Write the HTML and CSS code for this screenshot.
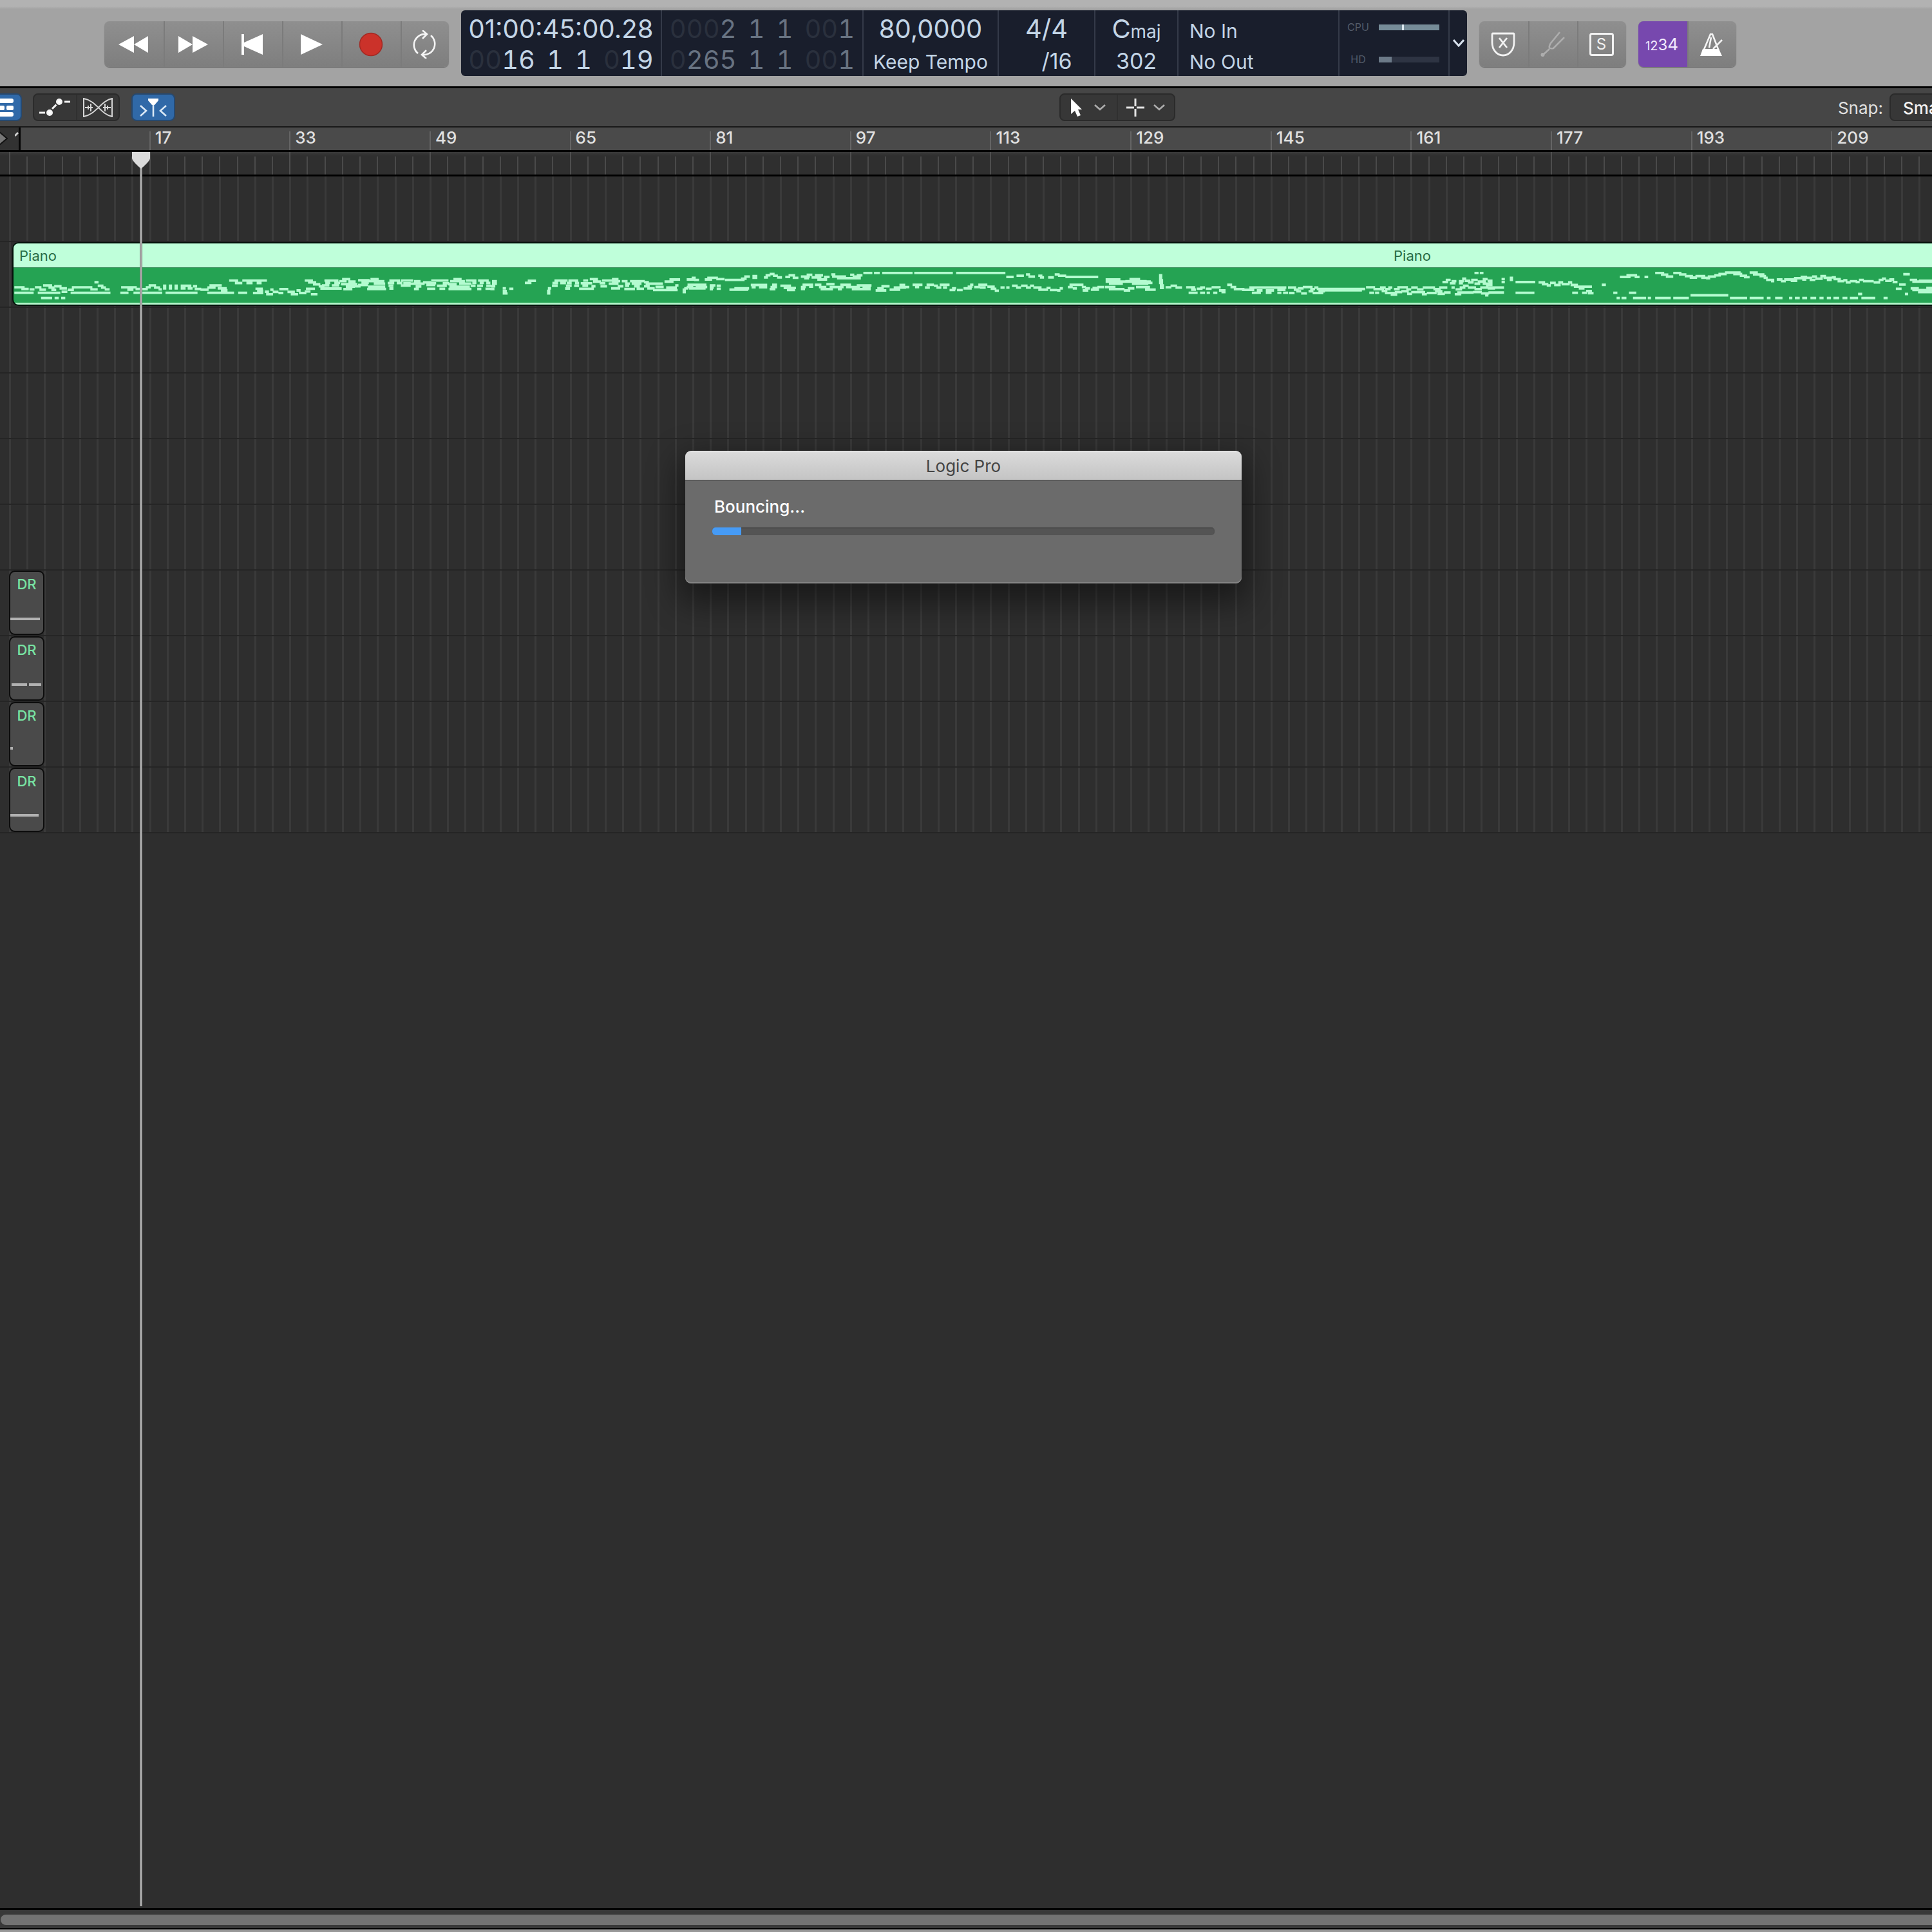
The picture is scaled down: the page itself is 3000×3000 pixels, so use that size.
FILE: index.html
```html
<!DOCTYPE html>
<html lang="en">
<head>
<meta charset="utf-8">
<title>Logic Pro</title>
<link rel="stylesheet" href="styles.css">
</head>
<body>
<header class="control-bar">
  <div class="group transport">
    <button aria-label="Rewind"><svg width="46" height="26" viewBox="0 0 46 26"><path fill="#fff" d="M0 13 24 0V13L46 0V26L24 13V26Z"/></svg></button>
    <button aria-label="Forward"><svg width="46" height="26" viewBox="0 0 46 26"><path fill="#fff" d="M46 13 22 0V13L0 0V26L22 13V26Z"/></svg></button>
    <button aria-label="Go to beginning"><svg width="34" height="32" viewBox="0 0 34 32"><path fill="#fff" d="M0 0H4V13L33 0V32L4 19V32H0Z"/></svg></button>
    <button aria-label="Play"><svg width="34" height="32" viewBox="0 0 34 32"><path fill="#fff" d="M0 0 34 16 0 32Z"/></svg></button>
    <button aria-label="Record"><svg width="38" height="38" viewBox="0 0 38 38"><circle cx="19" cy="19" r="17.5" fill="#cb322a" stroke="#a32a24" stroke-width="1.5"/></svg></button>
    <button class="narrow" aria-label="Cycle"><svg width="44" height="44" viewBox="0 0 44 44" fill="none" stroke="#f4f4f4" stroke-width="2.6"><path d="M12 36A17 17 0 0 1 25 6M32 8A17 17 0 0 1 19 38M19 0 26 6 19 13M25 31 18 38 25 44"/></svg></button>
  </div>

  <div class="lcd">
    <div class="cell time">
      <div class="row">01:00:45:00.28</div>
      <div class="row digits"><span><i>00</i>16</span><span>1</span><span>1</span><span><i>0</i>19</span></div>
    </div>
    <div class="cell locators">
      <div class="row digits"><span><i>000</i>2</span><span>1</span><span>1</span><span><i>00</i>1</span></div>
      <div class="row digits"><span><i>0</i>265</span><span>1</span><span>1</span><span><i>00</i>1</span></div>
    </div>
    <div class="cell tempo">
      <div class="row">80,0000</div>
      <div class="row"><span class="small">Keep Tempo</span></div>
    </div>
    <div class="cell meter">
      <div class="row">4/4</div>
      <div class="row division"><span class="medium">/16</span></div>
    </div>
    <div class="cell key">
      <div class="row">C<span class="mode">maj</span></div>
      <div class="row"><span class="medium">302</span></div>
    </div>
    <div class="cell io">
      <div class="row"><span class="small">No In</span></div>
      <div class="row"><span class="small">No Out</span></div>
    </div>
    <div class="cell load">
      <div class="load-row"><span>CPU</span><div class="load-bar full"></div></div>
      <div class="load-row"><span>HD</span><div class="load-bar part"></div></div>
    </div>
    <button class="lcd-menu" aria-label="Display mode"><svg width="18" height="12" viewBox="0 0 18 12" fill="none" stroke="#d8e2ee" stroke-width="3"><path d="M1 1 9 10 17 1"/></svg></button>
  </div>

  <div class="group modes">
    <button aria-label="Replace"><svg width="38" height="38" viewBox="0 0 38 38" fill="none" stroke="#f2f2f2" stroke-width="2.8"><path d="M3 2H35Q36 2 36 4V16C36 28 28 36 19 36S2 28 2 16V4Q2 2 3 2ZM13 9 25 24M25 9 13 24"/></svg></button>
    <button aria-label="Tuner"><svg width="40" height="40" viewBox="0 0 40 40" fill="none" stroke="#adadad" stroke-width="2.6"><path d="M31 1 17 18Q11 28 21 26L38 9M15 27 4 37"/><circle cx="4.500" cy="36" r="3" fill="#adadad" stroke="none"/></svg></button>
    <button aria-label="Solo"><span class="solo">S</span></button>
  </div>
  <div class="group modes">
    <button class="count-in" aria-label="Count in"><span class="n1">1</span><span class="n2">2</span><span class="n3">3</span><span class="n4">4</span></button>
    <button aria-label="Metronome"><svg width="36" height="38" viewBox="0 0 36 38" fill="none" stroke="#f5f5f5" stroke-width="2.6"><path d="M5 29 16 3H19L29 29M17 8 14 24M34 12 20 26"/><path fill="#fff" stroke="none" d="M4 26H29L34 37H0Z"/></svg></button>
  </div>
</header>

<nav class="toolbar">
  <button class="tool on first" aria-label="Region view"><svg width="42" height="28" viewBox="0 0 42 28" fill="#fff"><rect x="0" width="42" height="7" rx="3"/><rect x="14" y="11" width="14" height="7" rx="2"/><rect x="31" y="11" width="11" height="7" rx="2"/><rect x="0" y="21" width="42" height="7" rx="3"/></svg></button>
  <div class="tool-group">
    <button aria-label="Automation"><svg width="48" height="28" viewBox="0 0 48 28" stroke="#f4f4f4" stroke-width="3" fill="#fff"><path d="M0 22H9M39 5H48M20 16 28 8" stroke-dasharray="9 3"/><circle cx="16" cy="22" r="3.500"/><circle cx="31" cy="5" r="3.500"/></svg></button>
    <button aria-label="Flex"><svg width="46" height="30" viewBox="0 0 46 30" fill="none" stroke="#d6d6d6" stroke-width="2"><path d="M1 1V29C20 26 28 4 45 1V29C28 26 20 4 1 1ZM3 15H15M31 15H43M8 12V18M12 9V21M34 9V21M38 12V18"/></svg></button>
  </div>
  <button class="tool on catch" aria-label="Catch playhead"><svg width="44" height="28" viewBox="0 0 44 28" fill="none" stroke="#dbe9f6" stroke-width="2.600"><path d="M2 11 11 19 2 27M42 11 33 19 42 27M22 8V28"/><path fill="#fff" stroke="none" d="M14 0H30V3L24 10H20L14 3Z"/></svg></button>
  <span class="space-left"></span>
  <div class="tool-group pointers">
    <button aria-label="Left-click tool"><svg width="18" height="28" viewBox="0 0 18 28"><path fill="#fff" d="M0 0 17 17H11L15 26 10 28 6 19 0 24Z"/></svg><svg width="18" height="10" viewBox="0 0 18 10" fill="none" stroke="#adadad" stroke-width="2.600"><path d="M1 1 9 8 17 1"/></svg></button>
    <button aria-label="Command-click tool"><svg width="28" height="28" viewBox="0 0 28 28" fill="none" stroke="#e4e4e4" stroke-width="3"><path d="M14 0V12M14 16V28M0 14H12M16 14H28"/></svg><svg width="18" height="10" viewBox="0 0 18 10" fill="none" stroke="#adadad" stroke-width="2.600"><path d="M1 1 9 8 17 1"/></svg></button>
  </div>
  <span class="space-right"></span>
  <div class="snap">
    <label for="snap">Snap:</label>
    <select id="snap"><option>Smart</option></select>
  </div>
</nav>

<main class="arrange">
  <div class="ruler">
    <svg class="ruler-knob" width="12" height="24" viewBox="0 0 12 24"><path fill="#777" stroke="#111" stroke-width="2" d="M-2 1 11 12-2 23Z"/></svg>
    <ol class="bars">
      <li aria-label="1"><svg width="6" height="16" viewBox="0 0 6 16"><path d="M0 13 5 8" stroke="#d0d0d0" stroke-width="3"/></svg></li><li>17</li><li>33</li><li>49</li><li>65</li><li>81</li><li>97</li><li>113</li><li>129</li><li>145</li><li>161</li><li>177</li><li>193</li><li>209</li>
    </ol>
  </div>
  <div class="ticks"><div class="ticks-lines"></div></div>

  <section class="tracks">
    <div class="grid-lines"></div>
    <div class="track"></div>
    <div class="track">
      <div class="piano">
        <div class="piano-head"><span>Piano</span><span>Piano</span></div>
        <svg class="notes" viewBox="33 165 4671 165" preserveAspectRatio="none" fill="none" stroke="#b4fbd0" stroke-width="12">
          <path d="M35 257h25M52 265h18M72 267h12M85 257h16M96 268h16M105 248h22M118 258h15M125 269h12M132 252h18M145 262h18M165 269h15M175 257h50M220 267h18M230 233h10M238 250h14M246 258h12M255 267h12M35 283h47M92 283h55M150 278h14M172 283h97M100 308h27M133 308h10M149 308h10"/>
          <path d="M295 257h38M310 268h15M330 265h14M345 266h15M355 257h12M362 248h18M375 258h15M386 267h8M397 250h8M397 262h8M411 250h8M411 262h8M425 250h8M425 262h8M440 250h26M440 262h12M457 262h12M470 252h10M474 265h16M488 268h20M505 258h20M510 248h30M530 262h22M538 271h16M293 283h20M325 283h70M403 283h78M505 283h65M580 283h22"/>
          <path d="M558 225h22M572 237h18M590 225h30M600 237h15M618 225h32M625 237h12M622 264h18M626 273h15M616 284h25M645 278h10M648 290h17M658 268h8M664 279h14M680 266h22M678 284h12M700 279h18M708 290h18M722 272h10M728 284h18M745 264h22M742 277h14M757 290h16M742 225h20M750 234h20M762 243h18M776 252h14M780 263h12"/>
          <path d="M790 225h34M792 236h12M814 236h14M784 248h18M808 248h18M790 263h42M833 218h20M826 228h18M848 230h18M830 242h40M842 254h22M836 266h22M860 252h18M872 224h28M880 236h18M872 246h24M902 218h20M896 228h40M910 240h28M896 254h42M894 265h46M948 225h26M944 237h16M946 250h12M948 263h10M966 237h14M976 225h30M982 238h18M976 249h24M1008 228h16M996 240h38M1012 253h14M1008 265h12M1030 234h20M1038 246h22M1040 264h20M1050 225h42M1050 238h12M1064 250h24M1078 238h16M1070 264h14M1104 218h20M1096 228h36M1090 242h22M1118 240h30M1094 254h50M1092 265h56"/>
          <path d="M1134 225h26M1150 236h10M1146 250h12M1164 225h26M1168 236h10M1162 250h14M1162 265h10M1184 236h10M1184 250h12M1182 264h12M1198 228h12M1198 240h12M1196 252h10M1194 265h10M1224 262h8M1224 275h10M1224 286h12M1240 264h10M1285 226h20M1278 236h16M1350 225h32M1345 237h14M1344 250h14M1334 262h8M1332 274h8M1332 286h8M1364 237h14M1384 225h24M1380 237h12M1378 250h14M1376 263h12M1400 237h10M1398 250h12M1410 264h36M1420 225h12M1414 238h28M1418 250h14M1436 218h20M1444 230h20M1440 252h10M1466 225h26M1460 238h14M1462 252h16M1482 240h24M1490 218h16M1490 228h20M1488 262h22M1504 252h14M1514 228h14M1522 240h12M1522 250h10M1520 265h26M1534 228h26M1538 240h24M1544 252h14M1550 264h18M1556 228h14"/>
          <path d="M1568 233h12M1572 240h42M1568 252h14M1576 262h18M1590 270h60M1596 255h20M1622 258h26M1644 248h8M1618 230h22M1630 220h26M1662 268h8M1662 280h8M1666 262h10M1672 220h20M1684 212h10M1690 222h12M1674 245h46M1672 256h16M1694 256h28M1678 262h40M1716 220h18M1722 212h26M1744 218h20M1765 222h48M1728 248h14M1728 258h10M1728 266h8M1745 250h10M1745 264h10M1776 268h46M1788 262h36M1804 216h14M1812 206h14M1832 204h12M1832 212h12M1860 210h10M1864 200h12M1874 194h12M1882 202h12M1892 210h12M1828 246h40M1830 257h10M1848 257h20M1880 245h12M1876 256h16M1874 266h14M1900 250h26M1908 260h30M1916 270h20M1912 208h12M1920 200h16M1930 212h14"/>
          <path d="M1950 206h22M1964 198h14M1958 214h12M1976 210h24M1984 200h20M1990 220h24M2006 208h14M2024 196h10M2026 206h34M2038 214h58M2070 198h10M2076 206h20M2086 200h14M1954 245h26M1950 256h12M1950 265h10M1970 254h10M1984 245h16M1994 256h18M1998 266h22M2012 242h20M2020 256h20M2018 266h10M2046 245h26M2040 256h14M2040 266h10M2060 256h34M2074 266h46M2086 248h36M2100 258h20"/>
          <path d="M2102 189h22M2128 189h14M2148 189h74M2226 189h94M2328 189h120M2136 262h16M2132 272h26M2146 252h20M2166 268h26M2176 258h30M2190 246h14M2204 256h10M2222 245h24M2228 256h10M2256 245h18M2252 258h12M2274 250h10M2280 258h12M2288 245h12M2294 245h18M2296 258h10M2312 270h14M2318 262h10M2330 270h14M2346 262h20M2356 254h12M2362 245h8M2372 256h14M2382 245h22M2386 258h14M2404 254h18M2412 264h14M2422 273h10M2436 258h10M2450 258h8M2464 250h14M2474 258h12M2486 250h16M2498 258h12M2508 250h10M2516 258h20M2528 268h24M2548 260h10M2556 270h18M2574 272h8M2580 262h8"/>
          <path d="M2450 208h18M2475 202h18M2498 196h10M2504 206h16M2528 202h10M2532 210h10M2552 210h14M2568 196h12M2576 202h20M2594 208h80M2600 256h12M2604 245h34M2612 262h10M2634 256h10M2642 262h12M2636 272h14M2656 268h20M2660 260h12M2672 256h16M2692 220h36M2692 230h110M2700 240h34M2740 228h52M2750 218h26M2756 240h40M2784 236h22M2690 256h26M2700 266h38M2736 272h16M2746 262h16M2766 256h34M2788 268h26M2822 200h8M2822 212h8M2822 224h10M2822 236h10M2824 248h10M2824 260h10M2838 257h14M2850 250h16M2862 258h16M2888 257h22M2900 268h12M2914 264h14M2922 258h12M2936 264h14M2950 257h22M2894 283h22M2922 283h12M2938 283h8M2954 283h10M2968 272h16M2974 280h10M2988 245h12M2996 256h14M3004 266h26M3024 269h30M3042 258h90M3060 272h14M3082 272h20M3048 283h22M3082 283h14M3110 269h20M3110 283h10M3124 283h12"/>
          <path d="M3136 258h20M3150 268h12M3160 262h14M3172 256h24M3190 266h12M3200 258h10M3206 265h118M3226 271h90M3138 284h14M3156 276h12M3168 286h14M3186 276h12M3196 284h26M3210 276h16M3326 257h22M3344 266h26M3360 258h14M3334 283h12M3348 283h10M3364 275h14M3372 284h24M3386 292h16M3396 280h18M3412 276h18M3426 288h12M3436 280h34M3462 290h12M3474 284h24M3494 276h18M3500 288h18M3516 282h16M3372 266h14M3380 258h10M3394 266h14M3402 257h26M3424 267h12M3436 258h16M3450 267h16M3464 258h30M3490 266h18M3504 258h20"/>
          <path d="M3512 232h14M3520 222h12M3530 238h14M3534 228h12M3552 228h12M3552 238h10M3560 216h10M3566 226h14M3574 234h14M3582 222h16M3590 240h14M3598 230h20M3610 218h12M3610 240h20M3622 226h12M3618 248h16M3624 236h10M3590 189h10M3603 189h9M3656 218h8M3656 232h8M3676 212h8M3676 222h8M3534 258h8M3554 258h14M3562 250h14M3544 267h16M3574 258h20M3590 266h18M3604 258h20M3622 262h18M3634 258h28M3542 290h16M3548 282h40M3586 280h22M3606 286h20M3616 295h8M3624 282h38"/>
          <path d="M3690 232h48M3690 283h46M3746 234h16M3754 242h16M3766 248h10M3774 236h14M3784 246h16M3794 234h12M3802 242h20M3818 234h10M3824 246h18M3832 254h44M3844 262h14M3828 283h14M3852 283h12M3862 275h14M3866 285h14M3900 245h10M3928 283h10M3944 208h26M3960 200h26M3980 208h12M4004 208h9M3966 283h18M3936 308h8M3948 308h12M3976 308h32M4012 308h8M4030 308h38M4074 308h38M4116 295h92M4212 308h42M4260 308h34M4302 308h9M4322 308h18M4356 308h8M4370 308h12M4388 308h12M4408 308h14M4430 308h10M4448 308h10M4464 308h14M4486 308h12M4504 308h20M4524 289h10M4532 308h34M4586 308h10"/>
          <path d="M4030 189h22M4044 197h18M4056 206h18M4074 189h20M4088 196h18M4102 204h20M4114 211h18M4128 204h24M4142 212h16M4154 214h10M4158 206h20M4174 200h16M4184 194h20M4200 187h38M4220 194h22M4236 202h18M4246 209h14M4260 187h20M4268 196h28M4284 204h16M4294 212h10M4300 222h20M4312 228h8M4326 220h14M4336 228h12M4344 220h24M4360 226h16M4368 214h24M4384 208h16M4388 220h10M4398 212h14M4406 222h14M4412 206h12M4420 216h18M4432 204h14M4440 212h20M4448 222h12M4460 210h10M4464 218h18M4474 228h16M4488 224h10M4494 234h12M4504 228h18M4518 232h10M4526 222h12M4536 228h26M4562 234h16M4574 222h12M4582 216h10M4590 226h16M4600 220h12M4608 232h12M4634 195h16M4624 244h16M4616 264h14M4638 289h8M4650 222h18M4656 230h48M4672 226h32M4652 262h20M4656 270h48M4670 280h34M4690 260h14"/>
        </svg>
      </div>
    </div>
    <div class="track"></div>
    <div class="track"></div>
    <div class="track"></div>
    <div class="track"></div>
    <div class="track"><div class="drum">DR<svg width="52" height="10" viewBox="0 0 52 10"><path fill="#b2b2b2" d="M0 3h46v4H0z"/></svg></div></div>
    <div class="track"><div class="drum">DR<svg width="52" height="10" viewBox="0 0 52 10"><path fill="#b2b2b2" d="M2 3h24v4H2zM29 3h19v4H29z"/></svg></div></div>
    <div class="track"><div class="drum">DR<svg width="52" height="10" viewBox="0 0 52 10"><path fill="#b2b2b2" d="M0 0h4v4H0z"/></svg></div></div>
    <div class="track"><div class="drum">DR<svg width="52" height="10" viewBox="0 0 52 10"><path fill="#b2b2b2" d="M0 2h44v4H0z"/></svg></div></div>
  </section>

  <div class="playhead"><svg width="28" height="26" viewBox="0 0 28 26"><path fill="#dcdcdc" d="M0 0H28V10Q27 15 14 26 1 15 0 10Z"/></svg></div>
</main>

<div class="scroll"><div class="thumb"></div></div>
<footer class="edge"></footer>

<div class="dialog" role="dialog" aria-labelledby="dialog-title">
  <h1 id="dialog-title">Logic Pro</h1>
  <div class="dialog-body">
    <label for="bounce">Bouncing...</label>
    <progress id="bounce" max="781" value="45"></progress>
  </div>
</div>
</body>
</html>
```

FILE: styles.css
```css
* { box-sizing: border-box; }

body {
  margin: 0;
  min-height: 100vh;
  display: flex;
  flex-direction: column;
  position: relative;
  overflow-x: hidden;
  background: #2e2e2e;
  font-family: Inter, "Liberation Sans", sans-serif;
  color: #e0e0e0;
}

button {
  margin: 0;
  padding: 0;
  border: 0;
  background: none;
  color: inherit;
  font: inherit;
  display: flex;
  align-items: center;
  justify-content: center;
}

svg { display: block; flex: none; }

/* Control bar */
.control-bar {
  height: 137px;
  padding: 16px 0 0 162px;
  display: flex;
  align-items: flex-start;
  gap: 19px;
  border-bottom: 3px solid #000;
  background: linear-gradient(#b2b2b2 0 10px, #a3a3a3 14px);
}

.group {
  height: 71px;
  margin-top: 17px;
  display: flex;
  flex: none;
  overflow: hidden;
  border-radius: 8px;
  background: linear-gradient(#8f8f8f, #7e7e7e);
  box-shadow: 0 1px 1px #686868;
}

.group button { padding-right: 3px; }
.group button + button { border-left: 2px solid #7b7b7b; }
.transport button { width: 92px; }
.transport .narrow { width: 75px; }
.modes button { width: 76px; }

.solo {
  width: 38px;
  height: 36px;
  border: 3px solid #f2f2f2;
  border-radius: 4px;
  font-size: 24px;
  line-height: 30px;
  color: #f2f2f2;
}

.group .count-in {
  background: #7748ae;
  color: #f2eaff;
  align-items: baseline;
  padding-top: 20px;
}
.n1 { font-size: 18px; }
.n2 { font-size: 20px; }
.n3 { font-size: 24px; }
.n4 { font-size: 26px; }

/* LCD */
.lcd {
  height: 102px;
  display: flex;
  flex: none;
  border-radius: 6px;
  background: #191e2c;
  color: #c3d5e6;
}

.cell {
  padding: 5px 0 0;
  border-right: 2px solid #343a49;
  font-size: 40px;
  text-align: center;
  white-space: nowrap;
}

.row { height: 48px; line-height: 48px; }
.digits {
  display: flex;
  justify-content: center;
  gap: 18px;
  font-variant-numeric: tabular-nums;
}
.digits i { font-style: normal; color: #2a303d; }
.small { font-size: 30px; line-height: 1; }
.mode { font-size: 28px; line-height: 1; }
.medium { font-size: 34px; line-height: 1; }

.time { width: 312px; }
.locators { width: 313px; color: #687382; }
.tempo { width: 210px; }
.meter { width: 150px; }
.meter .division { padding-left: 32px; }
.key { width: 129px; }
.io { width: 250px; padding-left: 17px; text-align: left; }

.load {
  width: 171px;
  padding: 16px 14px 0 10px;
  display: flex;
  flex-direction: column;
  gap: 30px;
}
.load-row {
  height: 20px;
  display: flex;
  align-items: center;
  justify-content: space-between;
  font-size: 16px;
  line-height: 20px;
  color: #535c6a;
}
.load-row span { width: 38px; }
.load-bar { width: 94px; height: 9px; background: #2e3443; }
.load-bar.full { background: linear-gradient(to right, #768c98 36px, #dce8ee 36px 39px, #768c98 39px); }
.load-bar.part { background: linear-gradient(to right, #6c7a88 20px, #2e3443 20px); }
.lcd-menu { width: 27px; }

/* Toolbar */
.toolbar {
  height: 61px;
  display: flex;
  align-items: center;
  overflow: hidden;
  background: #464646;
  border-bottom: 2px solid #191919;
}

.tool, .tool-group {
  height: 43px;
  flex: none;
  border: 2px solid #2b2b2b;
  border-radius: 8px;
}
.tool.on { background: #3069a8; border-color: #27496f; }
.tool.first { width: 48px; margin-left: -14px; justify-content: flex-end; padding-right: 11px; }
.tool-group {
  width: 135px;
  margin-left: 17px;
  display: flex;
  background: #373737;
}
.tool-group button { flex: 1; }
.tool-group button + button { border-left: 2px solid #303030; }
.tool.catch { width: 68px; margin-left: 18px; }
.space-left { flex: 4; }
.space-right { flex: 3; }
.tool-group.pointers { width: 180px; margin: 0; }
.pointers button { gap: 18px; }
.pointers button + button { gap: 14px; }

.snap {
  display: flex;
  align-items: center;
  gap: 10px;
  margin-right: -94px;
  font-size: 26px;
}
.snap label { padding-top: 2px; }
.snap select {
  appearance: none;
  width: 160px;
  height: 43px;
  padding: 1px 19px 0;
  border: 2px solid #2b2b2b;
  border-radius: 8px;
  background: #373737;
  color: #f2f2f2;
  font: 500 26px Inter, sans-serif;
}

/* Ruler */
.arrange {
  flex: 1;
  display: flex;
  flex-direction: column;
  position: relative;
  overflow: hidden;
}

.ruler {
  height: 38px;
  position: relative;
  border-bottom: 3px solid #000;
  background: linear-gradient(to right, #323232 29px, #050505 29px 32px, #4a4a4a 32px);
}
.ruler-knob { position: absolute; left: 0; top: 5px; }
.bars {
  margin: 0 -61px 0 14px;
  padding: 0;
  display: grid;
  grid-template-columns: repeat(14, 1fr);
  list-style: none;
  font-size: 26px;
  font-weight: 500;
  line-height: 32px;
}
.bars li {
  height: 35px;
  padding-left: 9px;
  background: linear-gradient(#656565, #656565) 0 100% / 2px 29px no-repeat;
}
.bars li:first-child { background: none; }

.ticks {
  height: 38px;
  border-bottom: 3px solid #000;
  background: linear-gradient(#3a3a3a, #2f2f2f 6px 100%);
}
.ticks-lines {
  height: 35px;
  margin: 0 -61px 0 14px;
  background:
    repeating-linear-gradient(to right, #4e4e4e 0 2px, transparent 2px calc(100% / 14)),
    repeating-linear-gradient(to right, #4a4a4a 0 2px, transparent 2px calc(100% / 112)) 0 7px no-repeat;
}

/* Tracks */
.tracks { position: relative; }
.grid-lines {
  position: absolute;
  inset: 0 -61px 0 14px;
  background: repeating-linear-gradient(to right, #3a3a3a 0 3px, transparent 3px calc(100% / 112));
}
.track {
  height: 102px;
  position: relative;
  border-bottom: 2px solid #252525;
}

.piano {
  height: 99px;
  margin-left: 19px;
  border: 2px solid #04100a;
  border-width: 2px 0 2px 2px;
  border-radius: 10px 0 0 10px;
  overflow: hidden;
  background: #25a353;
}
.piano-head {
  height: 38px;
  padding-left: 9px;
  display: grid;
  grid-template-columns: 2134px 1fr;
  align-items: center;
  border-bottom: 1px solid #3a8f5c;
  background: #bfffda;
  font-size: 22px;
  color: #286c45;
}
.notes { width: 100%; height: 57px; border-bottom: 3px solid #b4f5cb; }

.drum {
  width: 55px;
  height: 100px;
  margin-left: 14px;
  padding-top: 6px;
  border: 2px solid #0c0c0c;
  border-radius: 9px;
  background: #4a4a4a;
  color: #78e3a3;
  font-size: 22px;
  font-weight: 500;
  line-height: 26px;
  text-align: center;
}
.drum svg { margin-top: 36px; }

.playhead {
  position: absolute;
  top: 38px;
  bottom: 3px;
  left: 205px;
  width: 28px;
  background: linear-gradient(to right, transparent 12px, #787878 12px 13px, #b0b0b0 13px 15px, #787878 15px 16px, transparent 16px);
}

/* Bottom scroller */
.scroll {
  height: 33px;
  padding: 7px 0 5px 1px;
  border: 3px solid #000;
  border-width: 3px 0 2px;
  background: #393939;
}
.thumb { height: 16px; border-radius: 8px 0 0 8px; background: #737373; }
.edge { height: 4px; background: #989898; }

/* Progress dialog */
.dialog {
  position: absolute;
  top: 700px;
  left: calc(50% - 436px);
  width: 864px;
  height: 206px;
  overflow: hidden;
  border-radius: 9px;
  background: #6b6b6b;
  box-shadow: 0 20px 50px 10px rgba(0, 0, 0, .45), inset 0 -2px 0 #858585;
}
.dialog h1 {
  height: 47px;
  margin: 0;
  border-bottom: 2px solid #5c5c5c;
  background: linear-gradient(#e6e6e6, #dadada 3px, #c4c4c4);
  color: #444;
  font-size: 26px;
  font-weight: 400;
  line-height: 48px;
  text-align: center;
}
.dialog-body {
  padding: 24px 42px 0;
  display: flex;
  flex-direction: column;
  gap: 16px;
}
.dialog label {
  padding-left: 3px;
  color: #fff;
  font-size: 26px;
  font-weight: 500;
  line-height: 32px;
}
.dialog progress {
  appearance: none;
  width: 100%;
  height: 12px;
  border: 0;
  border-radius: 5px;
  overflow: hidden;
}
.dialog progress::-webkit-progress-bar { background: #545454; box-shadow: inset 0 1px 2px #3f3f3f; }
.dialog progress::-webkit-progress-value { background: #469bf6; }
```
